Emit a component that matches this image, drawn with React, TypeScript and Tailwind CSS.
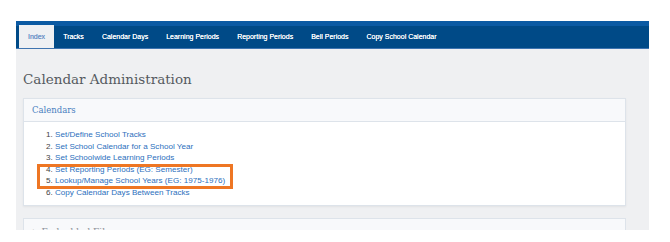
import React from "react";

const tabs = ["Tracks", "Calendar Days", "Learning Periods", "Reporting Periods", "Bell Periods", "Copy School Calendar"];
const items = [
  "Set/Define School Tracks",
  "Set School Calendar for a School Year",
  "Set Schoolwide Learning Periods",
  "Set Reporting Periods (EG: Semester)",
  "Lookup/Manage School Years (EG: 1975-1976)",
  "Copy Calendar Days Between Tracks",
];

export default function App() {
  return (
    <div className="w-[670px] h-[242px] bg-white overflow-hidden pt-[21px] pl-[16px]" style={{ fontFamily: '"Liberation Sans", Arial, sans-serif' }}>
      <div className="w-[633px]">
        <div className="h-[28px] bg-[#004a87] border-t-[5px] border-[#0b5aa3] border-b border-b-[#3e74b0] flex items-end pl-[3px]">
          <div className="h-[23px] px-[9px] pt-[2px] bg-[#eef0f3] flex items-center text-[7px] text-[#6f93c8] [text-shadow:0_0_0.3px_#6f93c8]">Index</div>
          {tabs.map((t) => (
            <div key={t} className="h-[23px] px-[9px] pt-[2px] flex items-center text-[7px] text-white whitespace-nowrap [text-shadow:0_0_0.4px_#fff]">{t}</div>
          ))}
        </div>
        <div className="h-[181px] bg-[#eff0f2] overflow-hidden px-[7px] relative">
          <div className="h-[49px] flex items-center pt-[12px] text-[13.5px] text-[#555a60]" style={{ fontFamily: '"DejaVu Serif", serif' }}>
            Calendar Administration
          </div>
          <div className="w-[603px] bg-white border border-[#dde3ea] shadow-[0_1px_2px_rgba(0,0,0,0.06)]">
            <div className="h-[23px] bg-[#f8f9fb] border-b border-[#dde3ea] flex items-center pl-[8px] text-[8.5px] text-[#4a7fc0]" style={{ fontFamily: '"DejaVu Serif", serif' }}>
              Calendars
            </div>
            <div className="h-[83px] pt-[7px] pl-[22px]">
              {items.map((it, i) => (
                <div key={it} className="h-[11.5px] leading-[11.5px] text-[8.1px] whitespace-nowrap">
                  <span className="text-[#444]">{i + 1}. </span>
                  <span className="text-[#2c6fbd]">{it}</span>
                </div>
              ))}
            </div>
          </div>
          <div className="mt-[12px] w-[603px] h-[30px] bg-[#f8f9fb] border border-[#dde3ea] flex items-start pt-[6px] pl-[9px] gap-[3px] text-[9px] text-[#8a9098]" style={{ fontFamily: '"DejaVu Serif", serif' }}>
            <span className="text-[7px] leading-[14px] text-[#777]">▶</span>
            <span className="leading-[14px]">Embedded Files</span>
          </div>
          <div className="absolute left-[21px] top-[115px] w-[196px] h-[25px] border-[3px] border-[#ee7623]" />
        </div>
      </div>
    </div>
  );
}
